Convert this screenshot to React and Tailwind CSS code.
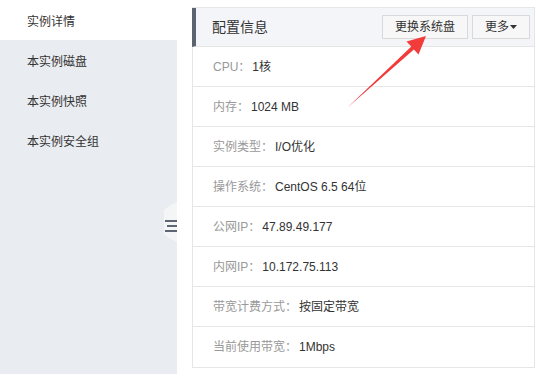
import React from 'react';

const FONT = { fontFamily: '"Liberation Sans", "Noto Sans CJK SC", sans-serif' };

const rows = [
  ['CPU：', '1核'],
  ['内存：', '1024 MB'],
  ['实例类型：', 'I/O优化'],
  ['操作系统：', 'CentOS 6.5 64位'],
  ['公网IP：', '47.89.49.177'],
  ['内网IP：', '10.172.75.113'],
  ['带宽计费方式：', '按固定带宽'],
  ['当前使用带宽：', '1Mbps'],
];

const menu = ['实例详情', '本实例磁盘', '本实例快照', '本实例安全组'];

export default function App() {
  return (
    <div className="relative w-[541px] h-[374px] overflow-hidden bg-white flex text-[12px] text-[#333]" style={FONT}>
      {/* sidebar */}
      <div className="relative w-[177px] shrink-0 bg-[#e9ecf0]">
        {menu.map((m, i) => (
          <div
            key={m}
            className={`h-10 flex items-center pl-[27px] pt-[3px] ${i === 0 ? 'bg-white' : ''}`}
          >
            {m}
          </div>
        ))}
        {/* collapse handle */}
        <div className="absolute right-0 top-[202px] w-[13px] h-[40px]">
          <svg width="13" height="40" viewBox="0 0 13 40">
            <polygon points="13,0 5,4 0,8 0,32 5,36 13,40" fill="#f4f5f7" />
            <rect x="1" y="18" width="12" height="2" fill="#5d6672" />
            <rect x="3" y="23" width="10" height="2" fill="#5d6672" />
            <rect x="1" y="28" width="12" height="2" fill="#5d6672" />
          </svg>
        </div>
      </div>

      {/* main panel */}
      <div className="pl-[15px] pt-[7px] w-[358px]">
        <div className="border border-[#e6e6e6] border-l-0">
          <div className="flex items-center h-[39px] bg-[#f4f5f9] border-l-4 border-[#5b6470] border-b border-b-[#e6e6e6] pl-4 pr-[4px]">
            <span className="text-[14px] flex-1">配置信息</span>
            <button className="h-[24px] w-[86px] border border-[#d9d9d9] bg-[#f7f7f7] text-[12px] text-[#333] mr-[4px]">
              更换系统盘
            </button>
            <button className="h-[24px] w-[58px] border border-[#d9d9d9] bg-[#f7f7f7] text-[12px] text-[#333] flex items-center justify-center">
              更多
              <svg width="7" height="4" viewBox="0 0 7 4" className="ml-[1px]">
                <polygon points="0,0 7,0 3.5,4" fill="#333" />
              </svg>
            </button>
          </div>
          {rows.map(([k, v], i) => (
            <div
              key={k}
              className={`h-10 flex items-center pl-5 border-l border-[#e6e6e6] ${i < rows.length - 1 ? 'border-b' : ''}`}
            >
              <span className="text-[#999]">{k}</span>
              <span className="ml-[2px]">{v}</span>
            </div>
          ))}
        </div>
      </div>

      {/* annotation arrow */}
      <svg className="absolute left-0 top-0 pointer-events-none" width="541" height="374">
        <polygon
          points="347,108 411.3,46.6 406.5,41.5 426,36 418.5,54.5 413.9,49.6"
          fill="#f23b3b"
        />
      </svg>
    </div>
  );
}
